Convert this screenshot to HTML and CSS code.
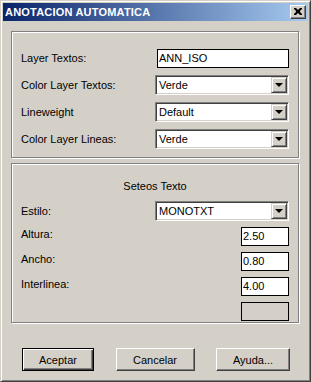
FILE: index.html
```html
<!DOCTYPE html>
<html>
<head>
<meta charset="utf-8">
<link rel="stylesheet" href="styles.css">
</head>
<body>
<div class="window">
  <div class="titlebar">
    <span class="title">ANOTACION AUTOMATICA</span>
    <div class="close">
      <svg width="8" height="7" viewBox="0 0 8 7"><path d="M0 0h2l2 2 2-2h2v1l-2 2v1l2 2v1h-2l-2-2-2 2h-2v-1l2-2v-1l-2-2z" fill="#000"/></svg>
    </div>
  </div>
  <div class="content">
    <div class="group g1">
      <div class="row">
        <span class="label">Layer Textos:</span>
        <div class="edit wide">ANN_ISO</div>
      </div>
      <div class="row">
        <span class="label">Color Layer Textos:</span>
        <div class="combo"><span class="val">Verde</span><span class="drop"><i class="arrow"></i></span></div>
      </div>
      <div class="row">
        <span class="label">Lineweight</span>
        <div class="combo"><span class="val">Default</span><span class="drop"><i class="arrow"></i></span></div>
      </div>
      <div class="row">
        <span class="label">Color Layer Lineas:</span>
        <div class="combo"><span class="val">Verde</span><span class="drop"><i class="arrow"></i></span></div>
      </div>
    </div>
    <div class="group g2">
      <div class="heading">Seteos Texto</div>
      <div class="row">
        <span class="label">Estilo:</span>
        <div class="combo"><span class="val">MONOTXT</span><span class="drop"><i class="arrow"></i></span></div>
      </div>
      <div class="row small">
        <span class="label">Altura:</span>
        <div class="edit num">2.50</div>
      </div>
      <div class="row small">
        <span class="label">Ancho:</span>
        <div class="edit num">0.80</div>
      </div>
      <div class="row small">
        <span class="label">Interlinea:</span>
        <div class="edit num">4.00</div>
      </div>
      <div class="row small">
        <span class="label"></span>
        <div class="edit num disabled"></div>
      </div>
    </div>
    <div class="buttons">
      <div class="btn default"><span>Aceptar</span></div>
      <div class="btn cancel"><span>Cancelar</span></div>
      <div class="btn help"><span>Ayuda...</span></div>
    </div>
  </div>
</div>
</body>
</html>
```
FILE: styles.css
```css
body {
  margin: 0;
  background: #ffffff;
  font-family: "Liberation Sans", Arial, sans-serif;
  font-size: 11px;
  color: #000;
}
.window {
  width: 311px;
  height: 382px;
  box-sizing: border-box;
  background: #d4d0c8;
  border: 1px solid;
  border-color: #d4d0c8 #404040 #404040 #d4d0c8;
  box-shadow: inset 1px 1px #ffffff, inset -1px -1px #808080;
  padding: 2px;
  display: flex;
  flex-direction: column;
}
.titlebar {
  height: 18px;
  flex: none;
  background: linear-gradient(to right, #0a246a, #a6caf0);
  display: flex;
  align-items: center;
  justify-content: space-between;
  padding: 0 2px 0 2px;
}
.title {
  color: #fff;
  font-weight: bold;
  font-size: 11px;
  letter-spacing: 0.2px;
}
.close {
  width: 16px;
  height: 14px;
  box-sizing: border-box;
  background: #d4d0c8;
  border: 1px solid;
  border-color: #ffffff #404040 #404040 #ffffff;
  box-shadow: inset -1px -1px #808080;
  display: flex;
  align-items: center;
  justify-content: center;
  padding: 0 1px 1px 0;
}
.close svg { display: block; }
.content {
  flex: 1;
  display: flex;
  flex-direction: column;
  padding: 10px 9px 0 8px;
}
.group {
  border: 1px solid #808080;
  box-shadow: inset 1px 1px #ffffff, 1px 1px #ffffff;
  display: flex;
  flex-direction: column;
  padding: 0 9px 0 9px;
}
.g1 {
  padding-top: 16px;
  padding-bottom: 8px;
  gap: 7px;
}
.g2 {
  margin-top: 5px;
  padding-top: 16px;
  padding-bottom: 1px;
  gap: 6px;
}
.row {
  height: 20px;
  display: flex;
  align-items: center;
  justify-content: space-between;
}
.row.small { height: 19px; }
.label {
  line-height: 13px;
}
.small .label { margin-top: -4px; }
.heading {
  text-align: center;
  line-height: 13px;
  margin-bottom: 2px;
}
.edit {
  box-sizing: border-box;
  background: #fff;
  border: 1px solid #000;
  height: 19px;
  line-height: 17px;
  padding-left: 1px;
}
.edit.wide { width: 132px; }
.edit.num { width: 48px; }
.edit.disabled { background: #d4d0c8; }
.combo {
  width: 134px;
  height: 20px;
  box-sizing: border-box;
  background: #fff;
  border: 1px solid;
  border-color: #808080 #ffffff #ffffff #808080;
  box-shadow: inset 1px 1px #404040, inset -1px -1px #d4d0c8;
  padding: 1px;
  display: flex;
  align-items: stretch;
}
.val {
  flex: 1;
  line-height: 16px;
  padding-left: 2px;
}
.drop {
  width: 16px;
  box-sizing: border-box;
  background: #d4d0c8;
  border: 1px solid;
  border-color: #d4d0c8 #404040 #404040 #d4d0c8;
  box-shadow: inset 1px 1px #ffffff, inset -1px -1px #808080;
  display: flex;
  align-items: center;
  justify-content: center;
}
.arrow {
  width: 0;
  height: 0;
  border-left: 4px solid transparent;
  border-right: 4px solid transparent;
  border-top: 4px solid #000;
  margin-right: 1px;
}
.buttons {
  display: flex;
  padding: 25px 9px 0 11px;
  justify-content: space-between;
}
.btn {
  height: 23px;
  box-sizing: border-box;
  background: #d4d0c8;
  border: 1px solid;
  border-color: #ffffff #404040 #404040 #ffffff;
  box-shadow: inset -1px -1px #808080;
  display: flex;
  align-items: center;
  justify-content: center;
}
.btn.default {
  width: 72px;
  border: 1px solid #000;
  box-shadow: inset 1px 1px #ffffff, inset -1px -1px #404040, inset -2px -2px #808080;
}
.btn.cancel { width: 79px; }
.btn.help { width: 74px; }
```
